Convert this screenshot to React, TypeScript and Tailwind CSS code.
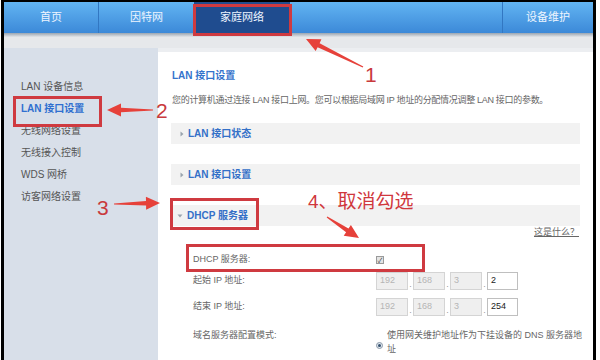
import React from "react";

function arrowPts(tx: number, ty: number, hx: number, hy: number, headLen = 14, headW = 13, shaftW = 4.5) {
  const dx = hx - tx;
  const dy = hy - ty;
  const L = Math.hypot(dx, dy);
  const ux = dx / L;
  const uy = dy / L;
  const nx = -uy;
  const ny = ux;
  const bx = hx - ux * headLen;
  const by = hy - uy * headLen;
  const p = (x: number, y: number) => `${x.toFixed(1)},${y.toFixed(1)}`;
  return [
    p(tx + nx * 0.6, ty + ny * 0.6),
    p(bx + (nx * shaftW) / 2, by + (ny * shaftW) / 2),
    p(bx + (nx * headW) / 2, by + (ny * headW) / 2),
    p(hx, hy),
    p(bx - (nx * headW) / 2, by - (ny * headW) / 2),
    p(bx - (nx * shaftW) / 2, by - (ny * shaftW) / 2),
    p(tx - nx * 0.6, ty - ny * 0.6),
  ].join(" ");
}

function Caret({ down = false }: { down?: boolean }) {
  return (
    <svg width="6" height="6" viewBox="0 0 6 6" className="shrink-0">
      {down ? <polygon points="0.5,1.5 5.5,1.5 3,4.5" fill="#9aa4ae" /> : <polygon points="1.5,0.5 4.5,3 1.5,5.5" fill="#9aa4ae" />}
    </svg>
  );
}

function Section({ label, down = false, className = "" }: { label: string; down?: boolean; className?: string }) {
  return (
    <div className={`flex h-[21px] items-center bg-[#f2f2f2] ${down ? "pl-[6px]" : "pl-[8px]"} gap-[3px] ${className}`}>
      <Caret down={down} />
      <span className={`text-[10px] font-bold text-[#3470c8] ${down ? "ml-[1px]" : ""}`}>{label}</span>
    </div>
  );
}

function IpBox({ v, active = false }: { v: string; active?: boolean }) {
  return (
    <div
      className={`flex h-[18px] items-center border pl-[3px] text-[9px] ${
        active ? "w-[31px] border-[#bfbfbf] bg-white text-[#222]" : "w-[32px] border-[#d4d4d4] bg-[#efefef] text-[#b5b5b5]"
      }`}
    >
      {v}
    </div>
  );
}

function Dot() {
  return <div className="flex h-[18px] w-[5px] items-end justify-center pb-[1px] text-[9px] leading-none text-[#999]">.</div>;
}

function IpRow({ last }: { last: string }) {
  return (
    <div className="flex items-center">
      <IpBox v="192" />
      <Dot />
      <IpBox v="168" />
      <Dot />
      <IpBox v="3" />
      <Dot />
      <IpBox v={last} active />
    </div>
  );
}

export default function App() {
  const side = ["LAN 设备信息", "LAN 接口设置", "无线网络设置", "无线接入控制", "WDS 网桥", "访客网络设置"];
  return (
    <div className="relative h-[360px] w-[600px] overflow-hidden bg-white font-['Liberation_Sans','Noto_Sans_CJK_SC',sans-serif]">
      <div className="ml-[1px] h-[400px] w-[595px] border-l-[3px] border-r-[3px] border-t-[2px] border-black">
        {/* top nav */}
        <div className="flex h-[31px] bg-linear-to-b from-[#62b4f2] to-[#3c89d8] text-[11px] text-[#eef5ff]">
          <div className="flex w-[94px] shrink-0 items-center justify-center">首页</div>
          <div className="w-px shrink-0 bg-[#3277c2]" />
          <div className="flex w-[95px] shrink-0 items-center justify-center">因特网</div>
          <div className="flex w-[96px] shrink-0 items-center justify-center bg-[#1f4c8f]">家庭网络</div>
          <div className="flex-1" />
          <div className="w-px shrink-0 bg-[#3277c2]" />
          <div className="flex w-[90px] shrink-0 items-center justify-center">设备维护</div>
        </div>
        <div className="h-[4px] bg-linear-to-b from-[#9aa5b1] to-[#e2e5e9]" />
        <div className="h-[11px] bg-[#e6e8eb]" />
        {/* main */}
        <div className="flex h-[330px] bg-[#eceef1]">
          <div className="w-[154px] shrink-0 bg-[#d8dfe9] pl-[17px] pt-[28px] text-[10px] leading-[22px] text-[#555]">
            {side.map((s, i) => (
              <div key={s} className={i === 1 ? "font-bold text-[#2f6fd0]" : ""}>
                {s}
              </div>
            ))}
          </div>
          <div className="mt-[4px] min-w-0 flex-1 bg-white pl-[13px] pr-[13px] pt-[17px]">
            <div className="h-[14px] pl-[1px] text-[10px] font-bold leading-[14px] text-[#3573cc]">LAN 接口设置</div>
            <div className="mt-[10px] h-[14px] whitespace-nowrap pl-[1px] text-[9px] leading-[14px] tracking-[-0.3px] text-[#666]">
              您的计算机通过连接 LAN 接口上网。您可以根据局域网 IP 地址的分配情况调整 LAN 接口的参数。
            </div>
            <Section label="LAN 接口状态" className="mt-[16px]" />
            <Section label="LAN 接口设置" className="mt-[20px]" />
            <Section label="DHCP 服务器" down className="mt-[20px]" />
            <div className="flex h-[12px] justify-end pr-[1px] text-[9px] leading-[12px] text-[#666]">
              <span className="underline">这是什么？</span>
            </div>
            <div className="mt-[13px] flex h-[18px] items-center pl-[22px] text-[9px] text-[#666]">
              <div className="w-[183px] shrink-0">DHCP 服务器:</div>
              <div className="flex h-[8px] w-[8px] items-center justify-center border border-[#9a9a9a] bg-[#e4e4e4] text-[7px] leading-none text-[#444]">
                ✓
              </div>
            </div>
            <div className="mt-[3px] flex items-center pl-[22px] text-[9px] text-[#666]">
              <div className="w-[183px] shrink-0">起始 IP 地址:</div>
              <IpRow last="2" />
            </div>
            <div className="mt-[8px] flex items-center pl-[22px] text-[9px] text-[#666]">
              <div className="w-[183px] shrink-0">结束 IP 地址:</div>
              <IpRow last="254" />
            </div>
            <div className="mt-[12px] flex pl-[22px] text-[9px] leading-[14px] text-[#666]">
              <div className="w-[183px] shrink-0">域名服务器配置模式:</div>
              <div className="flex items-center">
                <div className="mt-[6px] flex h-[7px] w-[7px] shrink-0 items-center justify-center rounded-full border border-[#8a98a8] bg-[#dfe6ee]">
                  <div className="h-[3px] w-[3px] rounded-full bg-[#34506e]" />
                </div>
                <div className="ml-[4px] w-[200px]">使用网关维护地址作为下挂设备的 DNS 服务器地址</div>
              </div>
            </div>
          </div>
        </div>
      </div>

      {/* annotations */}
      <div className="pointer-events-none absolute inset-0">
        <div className="absolute left-[193px] top-[4px] h-[32px] w-[99px] border-[3px] border-[#cf3a40]" />
        <div className="absolute left-[13px] top-[96px] h-[31px] w-[89px] border-[3px] border-[#cf3a40]" />
        <div className="absolute left-[170px] top-[198px] h-[32px] w-[89px] border-[3px] border-[#cf3a40]" />
        <div className="absolute left-[186px] top-[244px] h-[28px] w-[239px] border-[3px] border-[#cf3a40]" />
        <svg className="absolute left-0 top-0" width="600" height="360" viewBox="0 0 600 360">
          <polygon points={arrowPts(363, 67, 306, 39)} fill="#e6413a" />
          <polygon points={arrowPts(153, 110, 107, 110)} fill="#e6413a" />
          <polygon points={arrowPts(114, 204, 160, 203)} fill="#e6413a" />
          <polygon points={arrowPts(327, 217, 359, 238)} fill="#e6413a" />
        </svg>
        <div className="absolute left-[365px] top-[64px] text-[21px] leading-none text-[#c93a3c]">1</div>
        <div className="absolute left-[156px] top-[100px] text-[21px] leading-none text-[#c93a3c]">2</div>
        <div className="absolute left-[97px] top-[197px] text-[21px] leading-none text-[#c93a3c]">3</div>
        <div className="absolute left-[308px] top-[192px] whitespace-nowrap text-[19px] leading-none text-[#d0373d]">4、取消勾选</div>
      </div>
    </div>
  );
}
